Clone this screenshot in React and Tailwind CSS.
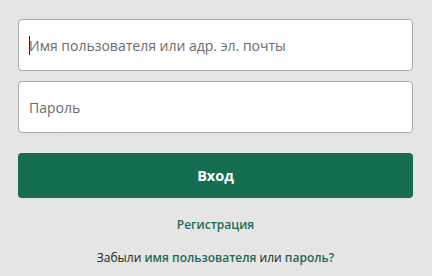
import React from "react";

export default function App() {
  return (
    <main
      className="w-[432px] h-[276px] bg-[#e5e5e5] px-[18px] pt-[19px]"
      style={{ fontFamily: '"Open Sans", "Noto Sans", sans-serif' }}
    >
      {/* LOGIN FORM */}
      <form className="flex flex-col w-[395px]">
        <div className="relative">
          <input
            type="text"
            placeholder="Имя пользователя или адр. эл. почты"
            className="w-full h-[52px] bg-white border border-[#a9a9a9] rounded-[4px] px-[10px] text-[14px] text-[#333] placeholder:text-[#6b6b6b] outline-none"
          />
          {/* caret */}
          <span className="absolute left-[11px] top-[17px] w-px h-[19px] bg-[#222]" />
        </div>
        <input
          type="password"
          placeholder="Пароль"
          className="mt-[10px] w-full h-[52px] bg-white border border-[#a9a9a9] rounded-[4px] px-[10px] text-[14px] text-[#333] placeholder:text-[#6b6b6b] outline-none"
        />
        <button
          type="button"
          className="mt-[20px] h-[45px] w-full rounded-[4px] bg-[#156e52] text-white font-bold text-[14.5px]"
        >
          Вход
        </button>
        <div className="mt-[18px] text-center text-[12px] font-semibold text-[#1f6b53]">
          Регистрация
        </div>
        <div className="mt-[15px] text-center text-[12px] text-[#222]">
          Забыли <span className="font-semibold text-[#1f6b53]">имя пользователя</span> или{" "}
          <span className="font-semibold text-[#1f6b53]">пароль?</span>
        </div>
      </form>
    </main>
  );
}
